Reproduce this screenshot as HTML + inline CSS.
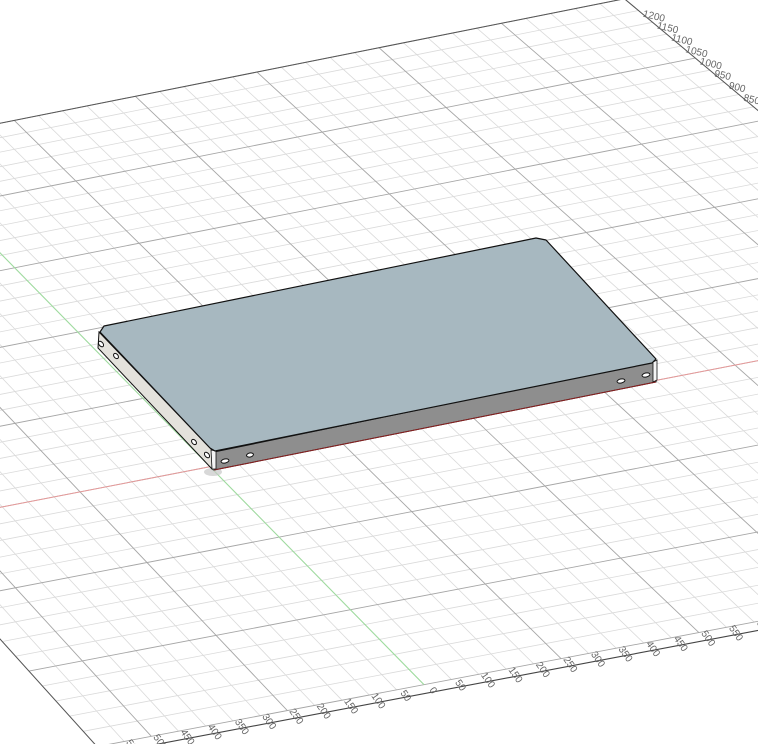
<!DOCTYPE html>
<html><head><meta charset="utf-8"><style>
html,body{margin:0;padding:0;background:#fff;width:758px;height:744px;overflow:hidden}
svg{display:block}
text{font-family:"Liberation Sans",sans-serif;font-size:10px;fill:#666}
</style></head><body>
<svg id="s" width="758" height="744" viewBox="0 0 758 744" xmlns="http://www.w3.org/2000/svg">
<g id="grid"></g>
<g id="labels"></g>
<ellipse cx="213" cy="472" rx="9" ry="4" fill="#c8c8c8" opacity="0.7"/>
<polygon points="99,332 212,450 212,469 98,348" fill="#e4e2dc" stroke="#111" stroke-width="1"/>
<polygon points="214,452 656,361 656,382 214,470" fill="#8e8e8e" stroke="#111" stroke-width="1"/>
<line x1="214" y1="470" x2="656" y2="382" stroke="#8a2020" stroke-width="1"/>
<polygon points="211,450 216,451 216,469 212,469" fill="#f4f4f4" stroke="#111" stroke-width="0.8"/>
<polygon points="653,362 657,360 657,380 653,382" fill="#f4f4f4" stroke="#111" stroke-width="0.8"/>
<polygon points="100,332 104,326 536,238 546,240 656,359 652,363 215,451 210,448" fill="#a7b8c0" stroke="#111" stroke-width="1.2" stroke-linejoin="round"/>
<g fill="#fff" stroke="#111" stroke-width="1">
<ellipse cx="225" cy="461" rx="4" ry="2" transform="rotate(-12 225 461)"/>
<ellipse cx="250" cy="455" rx="3.5" ry="2" transform="rotate(-12 250 455)"/>
<ellipse cx="621" cy="381" rx="4" ry="2" transform="rotate(-12 621 381)"/>
<ellipse cx="646" cy="375" rx="4" ry="2" transform="rotate(-12 646 375)"/>
<ellipse cx="101" cy="344" rx="2" ry="3.2" transform="rotate(-40 101 344)"/>
<ellipse cx="116" cy="356" rx="2" ry="3" transform="rotate(-40 116 356)"/>
<ellipse cx="194" cy="442" rx="2" ry="3" transform="rotate(-40 194 442)"/>
<ellipse cx="207" cy="455" rx="2" ry="3.2" transform="rotate(-40 207 455)"/>
</g>
</svg>
<script>
(function(){
var pts=[
 [0,0,213,470],[550,-750,740,617],[-550,-750,125,742],[0,-750,410,683],
 [250,0,341,445],[500,0,470,419],[750,0,600,394],[0,810,0,243],
 [-410,0,0,513],[1048,0,758,363]
];
function lsq(pts,inv){
 var M=[],B=[];for(var i=0;i<8;i++){M.push([0,0,0,0,0,0,0,0]);B.push(0);}
 pts.forEach(function(p){var u=p[0],v=p[1],x=p[2],y=p[3];if(inv){u=p[2];v=p[3];x=p[0];y=p[1];}
  var rows=[[u,v,1,0,0,0,-u*x,-v*x,x],[0,0,0,u,v,1,-u*y,-v*y,y]];
  rows.forEach(function(r){for(var i=0;i<8;i++){for(var j=0;j<8;j++)M[i][j]+=r[i]*r[j];B[i]+=r[i]*r[8];}});});
 var n=8,A=M,b=B;
 for(var c=0;c<n;c++){var p=c;for(var r=c+1;r<n;r++)if(Math.abs(A[r][c])>Math.abs(A[p][c]))p=r;
  var t=A[c];A[c]=A[p];A[p]=t;t=b[c];b[c]=b[p];b[p]=t;
  for(var r=0;r<n;r++){if(r==c)continue;var f=A[r][c]/A[c][c];for(var k=c;k<n;k++)A[r][k]-=f*A[c][k];b[r]-=f*b[c];}}
 var h=[];for(var i=0;i<n;i++)h.push(b[i]/A[i][i]);return h;}
var H=lsq(pts,false),Hi=lsq(pts,true);
function P(h,u,v){var w=h[6]*u+h[7]*v+1;return[(h[0]*u+h[1]*v+h[2])/w,(h[3]*u+h[4]*v+h[5])/w];}
var r=P(Hi,705,58);
var umin=-600,umax=Math.round(r[0]/50)*50,vmin=-750,vmax=1250;
if(!(umax>600&&umax<4000))umax=1400;
var ns="http://www.w3.org/2000/svg",g=document.getElementById('grid'),L=document.getElementById('labels');
function line(a,b,col,w){var e=document.createElementNS(ns,'line');e.setAttribute('x1',a[0].toFixed(2));e.setAttribute('y1',a[1].toFixed(2));e.setAttribute('x2',b[0].toFixed(2));e.setAttribute('y2',b[1].toFixed(2));e.setAttribute('stroke',col);e.setAttribute('stroke-width',w);g.appendChild(e);}
var minor=[],major=[];
for(var u=umin;u<=umax;u+=50){(u%250==0?major:minor).push([P(H,u,vmin),P(H,u,vmax)]);}
for(var v=vmin;v<=vmax;v+=50){(v%250==0?major:minor).push([P(H,umin,v),P(H,umax,v)]);}
minor.forEach(function(s){line(s[0],s[1],'#dadada',0.8);});
major.forEach(function(s){line(s[0],s[1],'#a6a6a6',0.9);});
var ve=vmin-25;
line(P(H,umin,ve),P(H,umax,ve),'#444',1.1);
line(P(H,umin,ve),P(H,umin,vmax),'#555',1);
line(P(H,umin,vmax),P(H,umax,vmax),'#555',1);
line(P(H,umax,ve),P(H,umax,vmax),'#555',1);
line(P(H,umin,0),P(H,umax,0),'#e69a9a',1);
line(P(H,0,vmin),P(H,0,vmax),'#9fe09f',1);
function txt(x,y,s,rot,anchor){var e=document.createElementNS(ns,'text');e.setAttribute('x',0);e.setAttribute('y',0);e.setAttribute('text-anchor',anchor);e.setAttribute('transform','translate('+x.toFixed(1)+','+y.toFixed(1)+') rotate('+rot+')');e.textContent=s;L.appendChild(e);}
for(var u=umin+50;u<umax;u+=50){var p=P(H,u,vmin-12);if(p[0]<-10||p[0]>770||p[1]>760)continue;txt(p[0]+3,p[1]+4,String(Math.abs(u)),55,'middle');}
for(var v=-700;v<vmax;v+=50){var p=P(H,umax,v);if(p[0]>770||p[1]<-10||p[1]>760)continue;txt(p[0]+4,p[1]+6,String(v),14,'start');}
})();
</script>
</body></html>
